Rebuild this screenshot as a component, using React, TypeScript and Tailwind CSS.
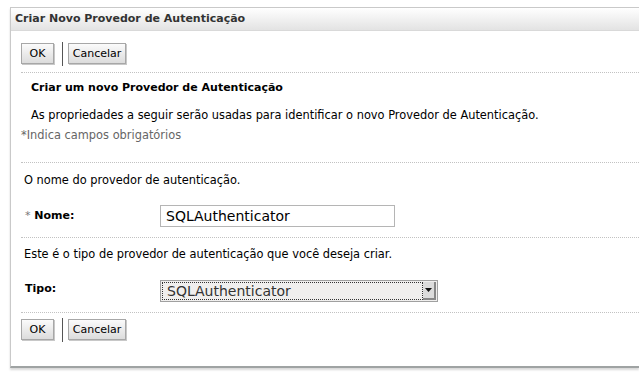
import React from "react";

function Buttons() {
  return (
    <div className="flex items-start h-[24px]">
      <button className="mt-px h-[21px] w-[33px] border border-[#a7a7a7] bg-gradient-to-b from-[#fbfbfb] to-[#dcdcdc] text-[11px] text-black leading-none shadow-[1px_1px_0_#c8c8c8]">
        OK
      </button>
      <div className="w-px h-[24px] bg-[#555] ml-[8px] mr-[5px]" />
      <button className="mt-px h-[21px] w-[58px] border border-[#a7a7a7] bg-gradient-to-b from-[#fbfbfb] to-[#dcdcdc] text-[11px] text-black leading-none shadow-[1px_1px_0_#c8c8c8]">
        Cancelar
      </button>
    </div>
  );
}

function Dots() {
  return <div className="border-t border-dotted border-[#c2c2c2]" />;
}

export default function App() {
  return (
    <div
      className="w-[639px] h-[378px] bg-white pt-[7px] pl-[10px] overflow-hidden"
      style={{ fontFamily: '"DejaVu Sans", Verdana, sans-serif' }}
    >
      <div className="h-[361px] border-t border-l border-b-2 border-[#c9c9c9] border-b-[#9fa3a3] shadow-[0_2px_2px_#d8d8d8] flex flex-col">
        <div className="h-[23px] flex items-center px-[4px] bg-gradient-to-b from-[#ffffff] to-[#e3e3e3] border-b border-[#d9d9d9]">
          <span className="text-[11px] font-bold text-[#333]">
            Criar Novo Provedor de Autenticação
          </span>
        </div>
        <div className="pl-[10px] pt-[11px]">
          <Buttons />
          <div className="mt-[6px]">
            <Dots />
          </div>
          <div className="pl-[10px] pt-[8px] leading-[14px] text-[11px] font-bold text-black">
            Criar um novo Provedor de Autenticação
          </div>
          <div className="pl-[10px] pt-[13px] leading-[14px] text-[11.4px] text-black">
            As propriedades a seguir serão usadas para identificar o novo Provedor de Autenticação.
          </div>
          <div className="pt-[6px] leading-[14px] text-[11.4px] text-[#666]">
            *Indica campos obrigatórios
          </div>
          <div className="mt-[20px]">
            <Dots />
          </div>
          <div className="pl-[3px] pt-[10px] leading-[14px] text-[11.4px] text-black">
            O nome do provedor de autenticação.
          </div>
          <div className="flex items-center pl-[4px] pt-[18px]">
            <div className="w-[135px] text-[11px] font-bold text-black">
              <span className="text-[#777] font-normal">*</span> Nome:
            </div>
            <input
              readOnly
              value="SQLAuthenticator"
              className="w-[235px] h-[22px] border border-[#b5b5b5] px-[5px] text-[14px] text-black outline-none"
              style={{ fontFamily: '"DejaVu Sans", Verdana, sans-serif' }}
            />
          </div>
          <div className="mt-[10px]">
            <Dots />
          </div>
          <div className="pl-[3px] pt-[9px] leading-[14px] text-[11.4px] text-black">
            Este é o tipo de provedor de autenticação que você deseja criar.
          </div>
          <div className="flex items-center pl-[4px] pt-[19px]">
            <div className="w-[135px] text-[11px] font-bold text-black -mt-[4px]">Tipo:</div>
            <div className="w-[278px] h-[22px] border border-[#a0a0a0] bg-[#f0efee] flex p-px">
              <div className="flex-1 border border-dotted border-[#333] flex items-center px-[4px] text-[14px] text-[#333]">
                SQLAuthenticator
              </div>
              <div className="w-[13px] bg-[#dcdcdc] border-r-2 border-b-2 border-[#888] flex items-center justify-center">
                <svg width="7" height="5" viewBox="0 0 7 5">
                  <path d="M0 0h7L3.5 4z" fill="#111" />
                </svg>
              </div>
            </div>
          </div>
          <div className="mt-[10px]">
            <Dots />
          </div>
          <div className="pt-[5px]">
            <Buttons />
          </div>
        </div>
      </div>
    </div>
  );
}
